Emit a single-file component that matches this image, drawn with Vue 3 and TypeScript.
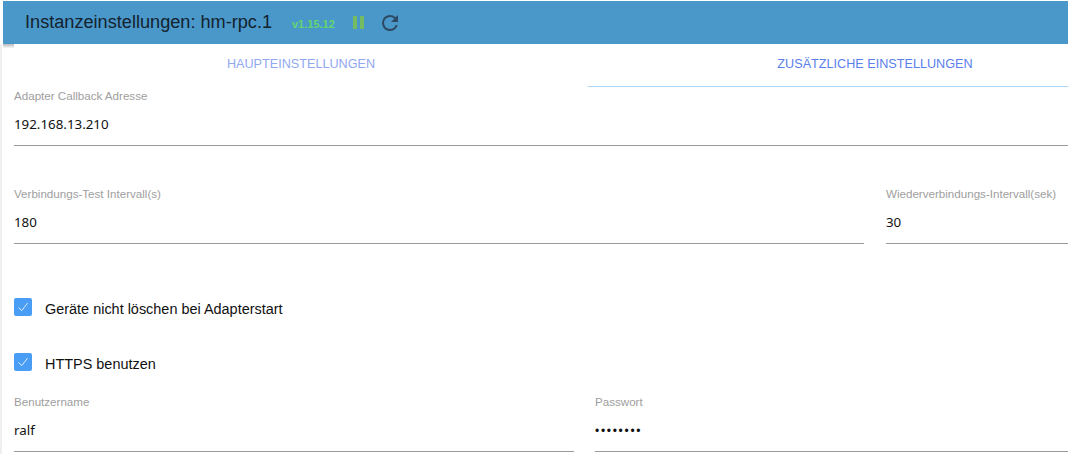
<script setup lang="ts">
const topFields = [
  { label: 'Verbindungs-Test Intervall(s)', value: '180', cls: 'wide' },
  { label: 'Wiederverbindungs-Intervall(sek)', value: '30', cls: 'rest' },
]
const checks = ['Geräte nicht löschen bei Adapterstart', 'HTTPS benutzen']
</script>

<template>
  <div class="page">
    <header class="bar">
      <h1 class="title">Instanzeinstellungen: hm-rpc.1</h1>
      <span class="version">v1.15.12</span>
      <span class="pause"><i></i><i></i></span>
      <svg class="reload" viewBox="0 0 24 24" width="24" height="24">
        <path fill="#2c4a63" d="M17.65 6.35A7.96 7.96 0 0 0 12 4a8 8 0 1 0 7.73 10h-2.08A6 6 0 1 1 12 6c1.66 0 3.14.69 4.22 1.78L13 11h7V4l-2.35 2.35z" />
      </svg>
    </header>
    <div class="corner"></div>
    <nav class="tabs">
      <div class="tab">HAUPTEINSTELLUNGEN</div>
      <div class="tab active">ZUSÄTZLICHE EINSTELLUNGEN</div>
    </nav>
    <main class="content">
      <div class="field first">
        <label>Adapter Callback Adresse</label>
        <div class="value">192.168.13.210</div>
      </div>
      <div class="row two">
        <div v-for="f in topFields" :key="f.label" class="field" :class="f.cls">
          <label>{{ f.label }}</label>
          <div class="value">{{ f.value }}</div>
        </div>
      </div>
      <div v-for="(c, i) in checks" :key="c" class="check" :class="{ second: i === 1 }">
        <span class="box">
          <svg viewBox="0 0 18 18" width="18" height="18">
            <path d="M4.5 9.5 L7.8 12.6 L13.6 5" fill="none" stroke="#dcecff" stroke-width="1" />
          </svg>
        </span>
        <span class="check-label">{{ c }}</span>
      </div>
      <div class="row three">
        <div class="field half">
          <label>Benutzername</label>
          <div class="value">ralf</div>
        </div>
        <div class="field half2">
          <label>Passwort</label>
          <div class="value dots">••••••••</div>
        </div>
      </div>
    </main>
  </div>
</template>

<style>
html, body { margin: 0; background: #fff; overflow: hidden; }
</style>

<style scoped>
.page {
  width: 1068px;
  height: 454px;
  overflow: hidden;
  position: relative;
  box-sizing: border-box;
  padding: 1px 0 0 3px;
  font-family: "Liberation Sans", Arial, sans-serif;
  background: #fff;
}
.page::before {
  content: "";
  position: absolute;
  left: 0;
  top: 44px;
  bottom: 0;
  width: 2px;
  background: #efefef;
}
.bar {
  height: 43px;
  background: #4a98ca;
  display: flex;
  align-items: center;
  padding-left: 22px;
}
.corner {
  position: absolute;
  left: 3px;
  top: 44px;
  width: 11px;
  height: 4px;
  background: linear-gradient(#b9b9b9, #f6f6f6);
}
.title {
  margin: 0;
  font-size: 18.15px;
  font-weight: 400;
  color: #14222e;
  width: 267px;
  flex: none;
  white-space: nowrap;
}
.version {
  font-size: 11px;
  font-weight: 700;
  color: #63d56f;
  width: 61px;
  flex: none;
  position: relative;
  top: 1px;
}
.pause {
  display: flex;
  gap: 3px;
  width: 25px;
  flex: none;
}
.pause i {
  display: block;
  width: 4px;
  height: 13px;
  background: #74bb63;
}
.reload { display: block; }
.tabs {
  display: flex;
  height: 43px;
  margin-left: 11px;
  width: 1148px;
}
.tab {
  box-sizing: border-box;
  flex: 0 0 574px;
  text-align: center;
  font-size: 12.65px;
  line-height: 41px;
  color: #90a8f0;
}
.tab.active {
  color: #5a80ee;
  border-bottom: 1px solid #a9d5fb;
}
.content {
  margin-left: 11px;
}
.field label {
  display: block;
  font-size: 11.6px;
  line-height: 14px;
  color: #9e9e9e;
  white-space: nowrap;
}
.value {
  font-family: "Noto Sans", "Open Sans", sans-serif;
  font-size: 13.33px;
  line-height: 20px;
  color: #111;
  padding-top: 11px;
  height: 31px;
  box-sizing: content-box;
  border-bottom: 1px solid #9a9a9a;
}
.first { padding-top: 2px; }
.row { display: flex; }
.row.two { margin-top: 41px; gap: 22px; }
.wide { flex: 0 0 850px; }
.rest { flex: 1; margin-right: -20px; }
.check {
  display: flex;
  align-items: center;
  height: 18px;
  margin-top: 54px;
  font-size: 14.45px;
  color: #111;
}
.check.second { margin-top: 37px; }
.box {
  width: 18px;
  height: 18px;
  border-radius: 2px;
  background: #4a9df5;
  display: block;
  flex: none;
}
.box svg { display: block; }
.check-label { margin-left: 13px; padding-top: 4px; }
.row.three { margin-top: 24px; gap: 21px; }
.half { flex: 0 0 560px; }
.half2 { flex: 1; margin-right: -20px; }
.dots {
  font-family: "Liberation Sans", sans-serif;
  font-size: 12px;
  letter-spacing: 1.7px;
  padding-top: 12px;
  height: 30px;
}
</style>
